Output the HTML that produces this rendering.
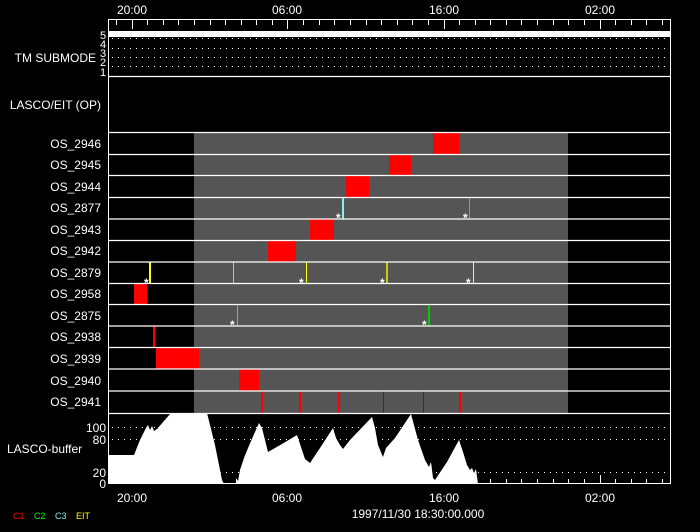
<!DOCTYPE html>
<html><head><meta charset="utf-8"><style>
html,body{margin:0;padding:0;background:#000;width:700px;height:532px;overflow:hidden}
svg{display:block}
text{font-family:"Liberation Sans",sans-serif;fill:#fff;font-size:12px}
</style></head><body>
<svg width="700" height="532" viewBox="0 0 700 532" xmlns="http://www.w3.org/2000/svg">
<rect width="700" height="532" fill="#000"/>
<rect x="194" y="132" width="374" height="281" fill="#555"/>
<text x="132" y="14" text-anchor="middle">20:00</text>
<text x="287" y="14" text-anchor="middle">06:00</text>
<text x="444" y="14" text-anchor="middle">16:00</text>
<text x="600" y="14" text-anchor="middle">02:00</text>
<rect x="109" y="31" width="562" height="6" fill="#fff"/>
<g stroke="#fff" stroke-width="1" stroke-dasharray="1 5">
<line x1="112" y1="38.5" x2="671" y2="38.5"/>
<line x1="112" y1="48.5" x2="671" y2="48.5"/>
<line x1="112" y1="57.5" x2="671" y2="57.5"/>
<line x1="112" y1="66.5" x2="671" y2="66.5"/>
<line x1="112" y1="427.5" x2="671" y2="427.5"/>
<line x1="112" y1="439.5" x2="671" y2="439.5"/>
<line x1="112" y1="472.5" x2="671" y2="472.5"/>
</g>
<text x="100" y="39" style="font-size:11px">5</text>
<text x="100" y="48" style="font-size:11px">4</text>
<text x="100" y="57" style="font-size:11px">3</text>
<text x="100" y="66" style="font-size:11px">2</text>
<text x="100" y="76" style="font-size:11px">1</text>
<text x="96" y="62" text-anchor="end">TM SUBMODE</text>
<text x="101" y="109" text-anchor="end">LASCO/EIT (OP)</text>
<g text-anchor="end">
<text x="101" y="148">OS_2946</text>
<text x="101" y="169">OS_2945</text>
<text x="101" y="191">OS_2944</text>
<text x="101" y="212">OS_2877</text>
<text x="101" y="234">OS_2943</text>
<text x="101" y="255">OS_2942</text>
<text x="101" y="277">OS_2879</text>
<text x="101" y="298">OS_2958</text>
<text x="101" y="320">OS_2875</text>
<text x="101" y="341">OS_2938</text>
<text x="101" y="363">OS_2939</text>
<text x="101" y="385">OS_2940</text>
<text x="101" y="406">OS_2941</text>
</g>
<g fill="#f00">
<rect x="433" y="132" width="26" height="22"/>
<rect x="389" y="154" width="22" height="21"/>
<rect x="346" y="175" width="23" height="22"/>
<rect x="310" y="219" width="24" height="21"/>
<rect x="268" y="240" width="28" height="22"/>
<rect x="134" y="283" width="13" height="21"/>
<rect x="153" y="326" width="2" height="21"/>
<rect x="156" y="347" width="43" height="22"/>
<rect x="239" y="369" width="20" height="22"/>
<rect x="261" y="391" width="2" height="22"/>
<rect x="299" y="391" width="2" height="22"/>
<rect x="338" y="391" width="2" height="22"/>
<rect x="459" y="391" width="2" height="22"/>
</g>
<rect x="383" y="391" width="1" height="22" fill="#a00"/>
<rect x="423" y="391" width="1" height="22" fill="#a00"/>
<rect x="342" y="197" width="2" height="22" fill="#8ee"/>
<rect x="469" y="197" width="1" height="22" fill="#3bc"/>
<rect x="149" y="262" width="2" height="21" fill="#ff0"/>
<rect x="233" y="262" width="1" height="21" fill="#cc4"/>
<rect x="306" y="262" width="1" height="21" fill="#ff0"/>
<rect x="386" y="262" width="2" height="21" fill="#cc0"/>
<rect x="473" y="262" width="1" height="21" fill="#ff0"/>
<rect x="237" y="304" width="1" height="22" fill="#4d4"/>
<rect x="428" y="304" width="2" height="22" fill="#0c0"/>
<g>
<text x="336" y="222" style="font-size:12px;font-weight:bold">*</text>
<text x="463" y="222" style="font-size:12px;font-weight:bold">*</text>
<text x="144" y="287" style="font-size:12px;font-weight:bold">*</text>
<text x="299" y="287" style="font-size:12px;font-weight:bold">*</text>
<text x="380" y="287" style="font-size:12px;font-weight:bold">*</text>
<text x="466" y="287" style="font-size:12px;font-weight:bold">*</text>
<text x="230" y="329" style="font-size:12px;font-weight:bold">*</text>
<text x="422" y="329" style="font-size:12px;font-weight:bold">*</text>
</g>
<g stroke="#fff" stroke-width="1.2">
<line x1="108" y1="76.5" x2="671" y2="76.5"/>
<line x1="108" y1="132.5" x2="671" y2="132.5"/>
<line x1="108" y1="154.5" x2="671" y2="154.5"/>
<line x1="108" y1="175.5" x2="671" y2="175.5"/>
<line x1="108" y1="197.5" x2="671" y2="197.5"/>
<line x1="108" y1="219" x2="671" y2="219"/>
<line x1="108" y1="240.5" x2="671" y2="240.5"/>
<line x1="108" y1="262" x2="671" y2="262"/>
<line x1="108" y1="283.5" x2="671" y2="283.5"/>
<line x1="108" y1="304.5" x2="671" y2="304.5"/>
<line x1="108" y1="326" x2="671" y2="326"/>
<line x1="108" y1="347.5" x2="671" y2="347.5"/>
<line x1="108" y1="369" x2="671" y2="369"/>
<line x1="108" y1="391" x2="671" y2="391"/>
<line x1="108" y1="413.5" x2="671" y2="413.5"/>
</g>
<polygon fill="#fff" points="108,484 108,455 134,455 140,440 146,428 148,425 150,430 152,426 154,431 157,429 171,413 207,413 215,445 222,480 224,484 236,484 236,478 238,481 240,470 244,458 248,448 255,432 259,423 262,428 268,452 282,444 297,435 300,444 305,459 310,463 320,448 333,428 336,438 340,445 343,449 350,440 372,417 375,428 378,445 383,457 386,448 395,438 411,414 418,440 425,460 429,467 431,462 433,478 435,480 447,462 459,440 463,452 467,465 470,470 472,468 474,473 476,469 478,484"/>
<line x1="478" y1="483.5" x2="671" y2="483.5" stroke="#d00" stroke-width="1"/>
<line x1="223" y1="483.5" x2="236" y2="483.5" stroke="#d00" stroke-width="1"/>
<text x="106" y="432" text-anchor="end">100</text>
<text x="106" y="444" text-anchor="end">80</text>
<text x="106" y="477" text-anchor="end">20</text>
<text x="106" y="488" text-anchor="end">0</text>
<text x="7" y="453">LASCO-buffer</text>
<rect x="108.5" y="19.5" width="562" height="464" fill="none" stroke="#fff" stroke-width="1"/>
<g stroke="#fff" stroke-width="1">
<path d="M116.5 20v5M132.5 20v9M147.5 20v5M163.5 20v5M178.5 20v5M194.5 20v5M210.5 20v5M225.5 20v5M241.5 20v5M256.5 20v5M272.5 20v5M287.5 20v9M303.5 20v5M319.5 20v5M334.5 20v5M350.5 20v5M366.5 20v5M381.5 20v5M397.5 20v5M412.5 20v5M428.5 20v5M444.5 20v9M459.5 20v5M475.5 20v5M490.5 20v5M506.5 20v5M521.5 20v5M537.5 20v5M553.5 20v5M568.5 20v5M584.5 20v5M600.5 20v9M615.5 20v5M631.5 20v5M646.5 20v5M662.5 20v5"/>
<path d="M490.5 483v-4M506.5 483v-4M521.5 483v-4M537.5 483v-4M553.5 483v-4M568.5 483v-4M584.5 483v-4M600.5 483v-8M615.5 483v-4M631.5 483v-4M646.5 483v-4M662.5 483v-4"/>
</g>
<text x="132" y="502" text-anchor="middle">20:00</text>
<text x="287" y="502" text-anchor="middle">06:00</text>
<text x="444" y="502" text-anchor="middle">16:00</text>
<text x="600" y="502" text-anchor="middle">02:00</text>
<text x="418" y="518" text-anchor="middle">1997/11/30 18:30:00.000</text>
<text x="13" y="519" style="font-size:9px;fill:#f00">C1</text>
<text x="34" y="519" style="font-size:9px;fill:#0f0">C2</text>
<text x="55" y="519" style="font-size:9px;fill:#8ee">C3</text>
<text x="76" y="519" style="font-size:9px;fill:#ff0">EIT</text>
</svg>
</body></html>
